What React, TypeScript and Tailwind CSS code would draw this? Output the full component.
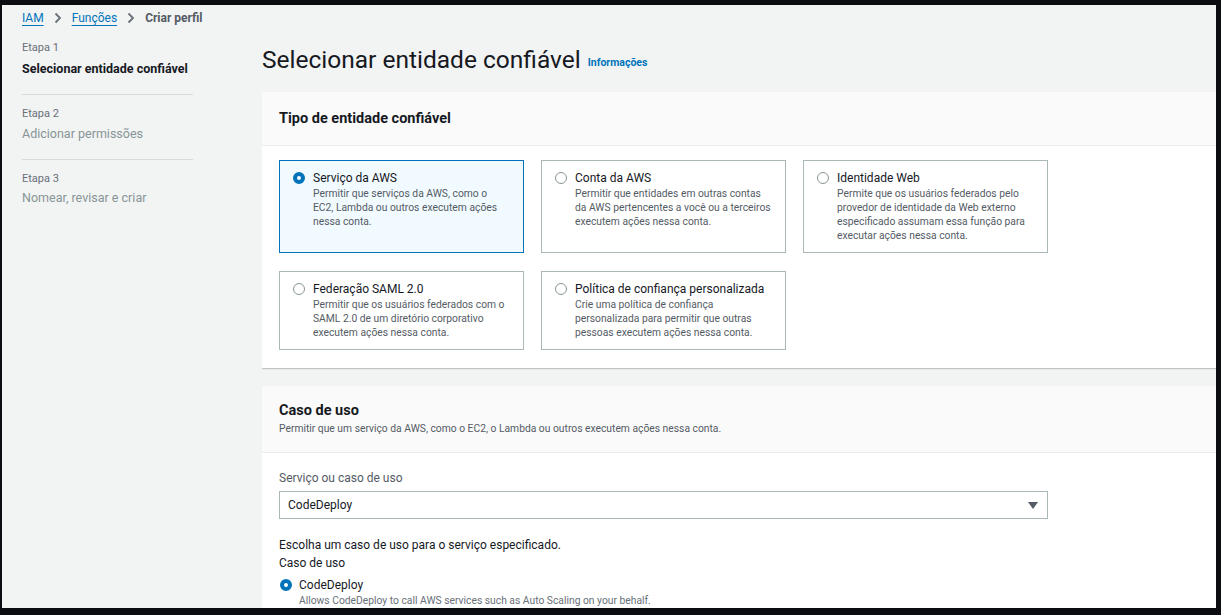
import React from "react";

type Option = {
  title: string;
  desc: string[];
  selected?: boolean;
};

const rowOne: Option[] = [
  {
    title: "Serviço da AWS",
    desc: ["Permitir que serviços da AWS, como o", "EC2, Lambda ou outros executem ações", "nessa conta."],
    selected: true,
  },
  {
    title: "Conta da AWS",
    desc: ["Permitir que entidades em outras contas", "da AWS pertencentes a você ou a terceiros", "executem ações nessa conta."],
  },
  {
    title: "Identidade Web",
    desc: [
      "Permite que os usuários federados pelo",
      "provedor de identidade da Web externo",
      "especificado assumam essa função para",
      "executar ações nessa conta.",
    ],
  },
];

const rowTwo: Option[] = [
  {
    title: "Federação SAML 2.0",
    desc: ["Permitir que os usuários federados com o", "SAML 2.0 de um diretório corporativo", "executem ações nessa conta."],
  },
  {
    title: "Política de confiança personalizada",
    desc: ["Crie uma política de confiança", "personalizada para permitir que outras", "pessoas executem ações nessa conta."],
  },
];

function Radio({ checked }: { checked?: boolean }) {
  return checked ? (
    <span className="mt-[2px] block h-[12px] w-[12px] shrink-0 rounded-full border-[4px] border-[#0073bb] bg-white" />
  ) : (
    <span className="mt-[2px] block h-[12px] w-[12px] shrink-0 rounded-full border border-[#879596] bg-white" />
  );
}

function Chevron() {
  return (
    <svg width="10" height="12" viewBox="0 0 10 12" className="mx-[9px]">
      <path d="M2.5 1.5 L7 6 L2.5 10.5" fill="none" stroke="#687078" strokeWidth="1.8" />
    </svg>
  );
}

function OptionCard({ opt, height }: { opt: Option; height: string }) {
  return (
    <div
      className={
        opt.selected
          ? `${height} border border-[#0073bb] bg-[#f1faff] pl-[13px] pr-[4px] pt-[9px]`
          : `${height} border border-[#aab7b8] bg-white pl-[13px] pr-[4px] pt-[9px]`
      }
    >
      <div className="flex gap-[8px]">
        <Radio checked={opt.selected} />
        <div className="whitespace-nowrap">
          <div className="text-[12px] leading-[16px] text-[#16191f]">{opt.title}</div>
          <div className="mt-[1px] text-[10.3px] leading-[14px] text-[#545b64]">
            {opt.desc.map((l) => (
              <div key={l}>{l}</div>
            ))}
          </div>
        </div>
      </div>
    </div>
  );
}

function Sidebar() {
  return (
    <div className="w-[171px] shrink-0 ml-[20px] pt-[11px]">
      <div className="text-[11px] leading-[14px] text-[#687078]">Etapa 1</div>
      <div className="mt-[6px] text-[12.5px] font-bold leading-[16px] text-[#16191f]">Selecionar entidade confiável</div>
      <div className="mt-[17px] border-t border-[#d5dbdb]" />
      <div className="mt-[12px] text-[11px] leading-[14px] text-[#687078]">Etapa 2</div>
      <div className="mt-[5px] text-[12.5px] leading-[16px] text-[#879596]">Adicionar permissões</div>
      <div className="mt-[17px] border-t border-[#d5dbdb]" />
      <div className="mt-[12px] text-[11px] leading-[14px] text-[#687078]">Etapa 3</div>
      <div className="mt-[4px] text-[12.5px] leading-[16px] text-[#879596]">Nomear, revisar e criar</div>
    </div>
  );
}

export default function App() {
  return (
    <div className="h-[615px] w-[1221px] overflow-hidden bg-[#0c0d10] pb-[7px] pl-[2px] pr-[5px] pt-[5px] font-['Roboto',sans-serif]">
      <div className="flex h-full flex-col overflow-hidden bg-[#f2f3f3]">
        <div className="flex h-[25px] shrink-0 items-center pl-[20px] pt-[1px] text-[12px]">
          <span className="text-[#0073bb] underline decoration-[#0073bb] underline-offset-[3px]">IAM</span>
          <Chevron />
          <span className="text-[#0073bb] underline decoration-[#0073bb] underline-offset-[3px]">Funções</span>
          <Chevron />
          <span className="font-bold text-[#545b64]">Criar perfil</span>
        </div>

        <div className="flex min-h-0 flex-1">
          <Sidebar />

          <div className="ml-[69px] min-w-0 flex-1 overflow-hidden">
            <div className="flex h-[62px] items-center pb-[2px]">
              <h1 className="text-[24.5px] font-normal leading-[30px] text-[#16191f]">Selecionar entidade confiável</h1>
              <span className="ml-[7px] mt-[6px] text-[10.5px] font-bold text-[#0073bb]">Informações</span>
            </div>

            <div className="w-[1000px] bg-white shadow-[0_1px_1px_0_rgba(0,28,36,0.15),1px_1px_1px_0_rgba(0,28,36,0.08)]">
              <div className="flex h-[54px] items-center border-b border-[#eaeded] bg-[#fafafa] pl-[17px]">
                <h2 className="text-[14.5px] font-bold text-[#16191f]">Tipo de entidade confiável</h2>
              </div>
              <div className="pb-[18px] pl-[17px] pt-[14px]">
                <div className="grid grid-cols-[245px_245px_245px] gap-x-[17px] gap-y-[18px]">
                  {rowOne.map((o) => (
                    <OptionCard key={o.title} opt={o} height="h-[93px]" />
                  ))}
                  {rowTwo.map((o) => (
                    <OptionCard key={o.title} opt={o} height="h-[79px]" />
                  ))}
                </div>
              </div>
            </div>

            <div className="mt-[18px] w-[1000px] bg-white shadow-[0_1px_1px_0_rgba(0,28,36,0.15),1px_1px_1px_0_rgba(0,28,36,0.08)]">
              <div className="h-[67px] border-b border-[#eaeded] bg-[#fafafa] pl-[17px] pt-[15px]">
                <h2 className="text-[14.5px] font-bold leading-[20px] text-[#16191f]">Caso de uso</h2>
                <div className="mt-[1px] text-[10.3px] leading-[14px] text-[#545b64]">
                  Permitir que um serviço da AWS, como o EC2, o Lambda ou outros executem ações nessa conta.
                </div>
              </div>
              <div className="pl-[17px] pt-[17px]">
                <div className="text-[12px] leading-[16px] text-[#545b64]">Serviço ou caso de uso</div>
                <div className="mt-[5px] flex h-[28px] w-[769px] items-center justify-between border border-[#aab7b8] bg-white pl-[8px] pr-[9px]">
                  <span className="text-[12px] text-[#16191f]">CodeDeploy</span>
                  <svg width="10" height="7" viewBox="0 0 10 7">
                    <path d="M0 0 H10 L5 7 Z" fill="#545b64" />
                  </svg>
                </div>
                <div className="mt-[17px] text-[12px] leading-[18px] text-[#16191f]">
                  Escolha um caso de uso para o serviço especificado.
                </div>
                <div className="text-[12px] leading-[18px] text-[#16191f]">Caso de uso</div>
                <div className="mt-[5px] flex gap-[7px] pl-[1px]">
                  <Radio checked />
                  <div>
                    <div className="text-[12px] leading-[16px] text-[#16191f]">CodeDeploy</div>
                    <div className="mt-[1px] text-[10.3px] leading-[14px] text-[#687078]">
                      Allows CodeDeploy to call AWS services such as Auto Scaling on your behalf.
                    </div>
                  </div>
                </div>
              </div>
            </div>
          </div>
        </div>
      </div>
    </div>
  );
}
